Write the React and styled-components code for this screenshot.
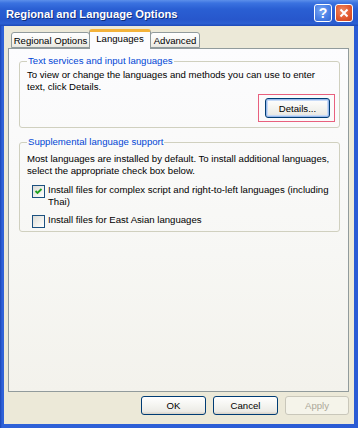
import React from "react";
import styled, { createGlobalStyle } from "styled-components";

const Global = createGlobalStyle`
  html, body { margin: 0; padding: 0; background: #ffffff; }
  body { font-family: "Liberation Sans", Arial, sans-serif; -webkit-font-smoothing: antialiased; }
  * { box-sizing: border-box; }
`;

const Window = styled.div`
  width: 358px;
  height: 428px;
  display: flex;
  flex-direction: column;
  background: linear-gradient(90deg, #1A45B5 0px, #2F62D8 2px, #2A5BD4 100%);
`;

const TitleBar = styled.div`
  height: 26px;
  flex: none;
  display: flex;
  align-items: center;
  gap: 3px;
  padding: 0 5px 0 6px;
  background: linear-gradient(180deg, #5C8FEA 0%, #3A72E0 12%, #2A5FD3 35%, #2757CC 75%, #2D60D2 90%, #1D49B8 100%);
`;

const Title = styled.div`
  flex: 1;
  color: #ffffff;
  font-weight: bold;
  font-size: 11.2px;
  text-shadow: 1px 1px 0 #12307F;
  padding-top: 1px;
`;

const CaptionButton = styled.div`
  width: 18px;
  height: 18px;
  border: 1px solid #ffffff;
  border-radius: 3px;
  display: flex;
  align-items: center;
  justify-content: center;
  color: #ffffff;
  font-weight: bold;
  font-size: 14px;
  background: ${(p) =>
    p.$close
      ? "radial-gradient(circle at 40% 35%, #F08A63 0%, #E25A30 55%, #C9401D 100%)"
      : "radial-gradient(circle at 40% 35%, #7AA6F2 0%, #4A80E6 55%, #3466D2 100%)"};
`;

const Body = styled.div`
  flex: 1;
  margin: 0 4px 4px 4px;
  background: #ECE9D8;
  display: flex;
  flex-direction: column;
  padding: 3px 5px 0 4px;
`;

const TabRow = styled.div`
  height: 19px;
  flex: none;
  display: flex;
  align-items: flex-end;
  padding-left: 3px;
  position: relative;
  z-index: 1;
`;

const Tab = styled.div`
  height: ${(p) => (p.$active ? "20px" : "16px")};
  margin-bottom: ${(p) => (p.$active ? "-1px" : "0")};
  width: ${(p) => p.$w}px;
  border: 1px solid #919B9C;
  border-bottom: ${(p) => (p.$active ? "none" : "1px solid #919B9C")};
  border-top: ${(p) => (p.$active ? "3px solid #F4B33B" : "1px solid #919B9C")};
  border-radius: 3px 3px 0 0;
  background: ${(p) =>
    p.$active ? "#FCFCFE" : "linear-gradient(180deg, #FFFFFF 0%, #F5F5F1 60%, #E8E7E0 100%)"};
  display: flex;
  align-items: ${(p) => (p.$active ? "flex-start" : "center")};
  justify-content: center;
  padding-top: ${(p) => (p.$active ? "1px" : "0")};
  font-size: 9.6px;
  color: #000000;
  white-space: nowrap;
  margin-left: ${(p) => (p.$active ? "-1px" : "0")};
  margin-right: ${(p) => (p.$active ? "-1px" : "0")};
  position: relative;
  z-index: ${(p) => (p.$active ? 2 : 1)};
`;

const Panel = styled.div`
  flex: 1;
  border: 1px solid #919B9C;
  background: linear-gradient(180deg, #FCFCFE 0%, #F7F7F4 60%, #F3F2EC 100%);
  padding: 6px 8px 0 10px;
  display: flex;
  flex-direction: column;
  gap: 8px;
`;

const Group = styled.fieldset`
  margin: 0;
  border: 1px solid #D0D0BF;
  border-radius: 3px;
  padding: 0 9px ${(p) => p.$pb}px 7px;
  display: flex;
  flex-direction: column;
  min-width: 0;
`;

const Legend = styled.legend`
  padding: 0 1px;
  font-size: 9.6px;
  line-height: 12px;
  color: #0046D5;
`;

const Text = styled.p`
  margin: ${(p) => p.$mt}px 0 0 0;
  font-size: 9.6px;
  line-height: 12px;
  color: #000000;
`;

const Highlight = styled.div`
  align-self: flex-end;
  margin-top: 1px;
  margin-right: -5px;
  border: 1px solid #E8607E;
  padding: 3px 4px 3px 6px;
  display: flex;
`;

const Button = styled.button`
  width: ${(p) => p.$w || 64}px;
  height: ${(p) => p.$h || 19}px;
  padding: 0;
  border: 1px solid ${(p) => (p.disabled ? "#C9C7BA" : "#003C74")};
  border-radius: 3px;
  background: ${(p) =>
    p.disabled ? "#F5F4EA" : "linear-gradient(180deg, #FFFFFF 0%, #F4F4F0 50%, #ECEBE6 85%, #D6D0C5 100%)"};
  box-shadow: ${(p) => (p.$focus ? "inset 0 0 0 1px #98B8EA, inset 0 0 0 2px #C8DBF7" : "none")};
  font-family: "Liberation Sans", Arial, sans-serif;
  font-size: 9.6px;
  color: ${(p) => (p.disabled ? "#ACA899" : "#000000")};
  display: flex;
  align-items: center;
  justify-content: center;
`;

const CheckRow = styled.div`
  display: flex;
  align-items: flex-start;
  gap: 3px;
  padding-left: 5px;
  margin-top: ${(p) => p.$mt}px;
`;

const Box = styled.span`
  flex: none;
  width: 13px;
  height: 13px;
  margin-top: 1px;
  border: 1px solid #1C5180;
  background: linear-gradient(135deg, #DCDCD7 0%, #F2F2EE 60%, #FFFFFF 100%);
  display: flex;
  align-items: center;
  justify-content: center;
`;

const CheckLabel = styled.span`
  font-size: 9.6px;
  line-height: 12px;
  color: #000000;
`;

const Footer = styled.div`
  flex: none;
  display: flex;
  justify-content: flex-end;
  gap: 7px;
  padding: 4px 0 9px 0;
`;

function CheckBox({ checked }) {
  return (
    <Box>
      {checked && (
        <svg width="9" height="9" viewBox="0 0 9 9">
          <path d="M1.5 4 L3.5 6 L7.5 2" fill="none" stroke="#21A121" strokeWidth="1.8" />
        </svg>
      )}
    </Box>
  );
}

export default function App() {
  return (
    <>
      <Global />
      <Window>
        <TitleBar>
          <Title>Regional and Language Options</Title>
          <CaptionButton>?</CaptionButton>
          <CaptionButton $close>
            <svg width="10" height="10" viewBox="0 0 10 10">
              <path d="M1.5 1.5 L8.5 8.5 M8.5 1.5 L1.5 8.5" stroke="#fff" strokeWidth="2" />
            </svg>
          </CaptionButton>
        </TitleBar>
        <Body>
          <TabRow>
            <Tab $w={79}>Regional Options</Tab>
            <Tab $w={62} $active>Languages</Tab>
            <Tab $w={50}>Advanced</Tab>
          </TabRow>
          <Panel>
            <Group $pb={5}>
              <Legend>Text services and input languages</Legend>
              <Text $mt={2}>
                To view or change the languages and methods you can use to enter text, click Details.
              </Text>
              <Highlight>
                <Button $w={65} $h={20} $focus>Details...</Button>
              </Highlight>
            </Group>
            <Group $pb={3}>
              <Legend>Supplemental language support</Legend>
              <Text $mt={5}>
                Most languages are installed by default. To install additional languages, select the appropriate check box below.
              </Text>
              <CheckRow $mt={7}>
                <CheckBox checked />
                <CheckLabel>
                  Install files for complex script and right-to-left languages (including Thai)
                </CheckLabel>
              </CheckRow>
              <CheckRow $mt={6}>
                <CheckBox />
                <CheckLabel>Install files for East Asian languages</CheckLabel>
              </CheckRow>
            </Group>
          </Panel>
          <Footer>
            <Button $w={65}>OK</Button>
            <Button $w={65}>Cancel</Button>
            <Button disabled>Apply</Button>
          </Footer>
        </Body>
      </Window>
    </>
  );
}
